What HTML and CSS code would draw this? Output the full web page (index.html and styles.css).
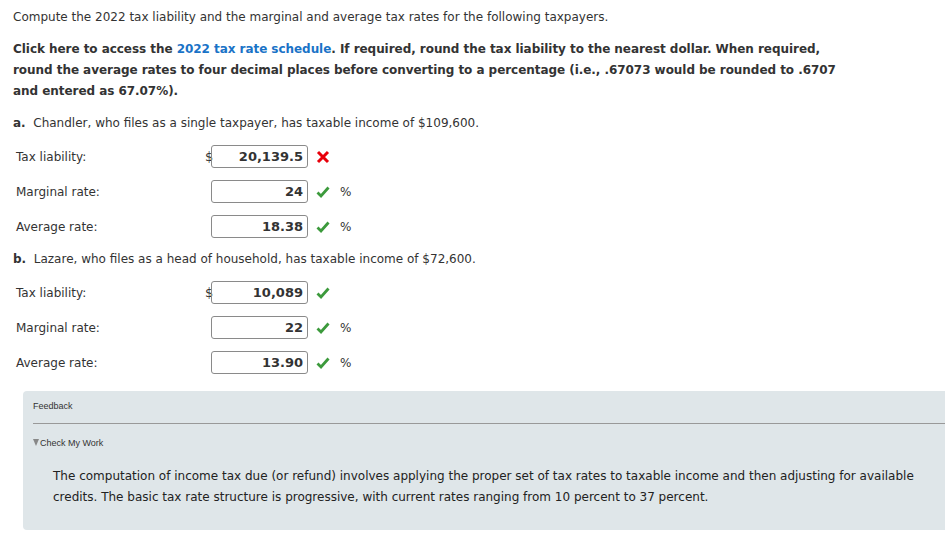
FILE: index.html
```html
<!DOCTYPE html>
<html lang="en">
<head>
    <meta charset="UTF-8">
    <title>Tax Liability Problem</title>
    <link rel="stylesheet" href="styles.css">
</head>
<body>
    <div class="question">
        <p class="intro">Compute the 2022 tax liability and the marginal and average tax rates for the following taxpayers.</p>
        <p class="instructions">Click here to access the <a href="#" class="link">2022 tax rate schedule</a>. If required, round the tax liability to the nearest dollar. When required, round the average rates to four decimal places before converting to a percentage (i.e., .67073 would be rounded to .6707 and entered as 67.07%).</p>

        <p class="part"><b>a.</b>&nbsp; Chandler, who files as a single taxpayer, has taxable income of $109,600.</p>
        <div class="rows">
            <div class="row">
                <span class="label">Tax liability:</span>
                <span class="dollar">$</span>
                <span class="answer">20,139.5</span>
                <span class="mark"><svg width="14" height="14" viewBox="0 0 14 14"><path d="M2 2 L12 12 M12 2 L2 12" stroke="#e8000b" stroke-width="3"/></svg></span>
                <span class="unit"></span>
            </div>
            <div class="row">
                <span class="label">Marginal rate:</span>
                <span class="dollar"></span>
                <span class="answer">24</span>
                <span class="mark"><svg width="14" height="14" viewBox="0 0 14 14"><path d="M1.5 7.5 L5 11 L12.5 2.5" stroke="#3c9a3c" stroke-width="2.8" fill="none"/></svg></span>
                <span class="unit">%</span>
            </div>
            <div class="row">
                <span class="label">Average rate:</span>
                <span class="dollar"></span>
                <span class="answer">18.38</span>
                <span class="mark"><svg width="14" height="14" viewBox="0 0 14 14"><path d="M1.5 7.5 L5 11 L12.5 2.5" stroke="#3c9a3c" stroke-width="2.8" fill="none"/></svg></span>
                <span class="unit">%</span>
            </div>
        </div>

        <p class="part part-next"><b>b.</b>&nbsp; Lazare, who files as a head of household, has taxable income of $72,600.</p>
        <div class="rows">
            <div class="row">
                <span class="label">Tax liability:</span>
                <span class="dollar">$</span>
                <span class="answer">10,089</span>
                <span class="mark"><svg width="14" height="14" viewBox="0 0 14 14"><path d="M1.5 7.5 L5 11 L12.5 2.5" stroke="#3c9a3c" stroke-width="2.8" fill="none"/></svg></span>
                <span class="unit"></span>
            </div>
            <div class="row">
                <span class="label">Marginal rate:</span>
                <span class="dollar"></span>
                <span class="answer">22</span>
                <span class="mark"><svg width="14" height="14" viewBox="0 0 14 14"><path d="M1.5 7.5 L5 11 L12.5 2.5" stroke="#3c9a3c" stroke-width="2.8" fill="none"/></svg></span>
                <span class="unit">%</span>
            </div>
            <div class="row">
                <span class="label">Average rate:</span>
                <span class="dollar"></span>
                <span class="answer">13.90</span>
                <span class="mark"><svg width="14" height="14" viewBox="0 0 14 14"><path d="M1.5 7.5 L5 11 L12.5 2.5" stroke="#3c9a3c" stroke-width="2.8" fill="none"/></svg></span>
                <span class="unit">%</span>
            </div>
        </div>
    </div>

    <div class="feedback">
        <div class="feedback-title">Feedback</div>
        <div class="check-work"><span class="triangle"></span>Check My Work</div>
        <p class="feedback-text">The computation of income tax due (or refund) involves applying the proper set of tax rates to taxable income and then adjusting for available credits. The basic tax rate structure is progressive, with current rates ranging from 10 percent to 37 percent.</p>
    </div>
</body>
</html>
```

FILE: styles.css
```css
body {
    margin: 0;
    font-family: "DejaVu Sans", Verdana, sans-serif;
    font-size: 12px;
    color: #333;
    background-color: #fff;
}
.question {
    padding: 0 0 0 13px;
}
.intro {
    margin: 0;
    padding-top: 9px;
    line-height: 16px;
}
.instructions {
    margin: 14px 0 0 0;
    font-weight: bold;
    line-height: 21px;
    width: 836px;
    letter-spacing: -0.05px;
}
.link {
    color: #1a73c7;
    text-decoration: none;
}
.part {
    margin: 12px 0 0 0;
    line-height: 18px;
}
.part-next {
    margin-top: 6px;
}
.rows {
    margin-top: 7px;
    padding-left: 3px;
}
.row {
    display: flex;
    align-items: center;
    height: 35px;
}
.label {
    width: 189px;
}
.dollar {
    width: 6px;
    font-size: 13px;
}
.answer {
    box-sizing: border-box;
    width: 97px;
    height: 23px;
    border: 1px solid #8a8a8a;
    border-radius: 3px;
    padding: 0 4px;
    text-align: right;
    font-weight: bold;
    font-size: 13px;
    line-height: 21px;
}
.mark {
    display: flex;
    width: 14px;
    margin-left: 8px;
}
.unit {
    margin-left: 10px;
}
.feedback {
    margin: 11px 0 13px 23px;
    background-color: #dfe6e9;
    border-radius: 4px 0 0 4px;
    padding: 10px 0 22px 10px;
}
.feedback-title {
    font-family: "Liberation Sans", Arial, sans-serif;
    font-size: 9px;
    padding-bottom: 12px;
    border-bottom: 1px solid #999;
}
.check-work {
    display: flex;
    align-items: center;
    font-family: "Liberation Sans", Arial, sans-serif;
    font-size: 9px;
    margin-top: 14px;
}
.triangle {
    width: 0;
    height: 0;
    border-left: 3.5px solid transparent;
    border-right: 3.5px solid transparent;
    border-top: 7px solid #888;
    margin: -2px 1px 0 0;
}
.feedback-text {
    margin: 18px 20px 0 20px;
    line-height: 21px;
    color: #222;
}
```
